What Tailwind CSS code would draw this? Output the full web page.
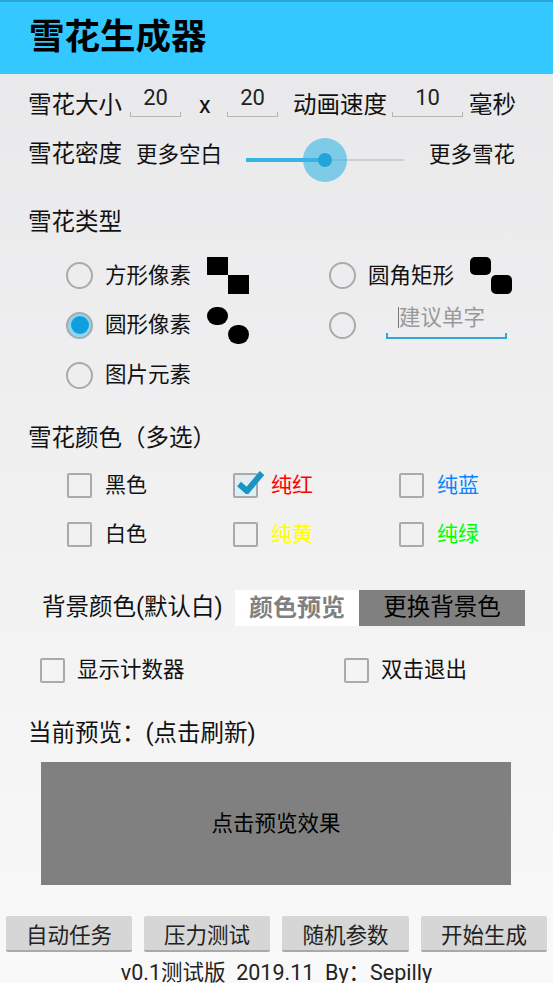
<!DOCTYPE html>
<html lang="zh-CN">
<head>
  <meta charset="UTF-8" />
  <meta name="viewport" content="width=device-width, initial-scale=1.0"/>
  <title>雪花生成器</title>
  <script src="https://cdn.jsdelivr.net/npm/@tailwindcss/browser@4"></script>
</head>
<body class="m-0">
<div class="w-[553px] h-[983px] overflow-hidden bg-linear-to-b from-[#e8e8ea] to-[#f9f9f9] text-[#111] font-[Roboto,'Noto_Sans_CJK_SC',sans-serif]">

  <!-- title bar -->
  <header class="h-[74px] bg-[#33c8ff] border-t-2 border-[#2aa5d4] flex items-center pl-[29px]">
    <h1 class="text-[35.5px] leading-none font-bold text-black">雪花生成器</h1>
  </header>

  <!-- size + speed -->
  <div class="mt-[12px] h-[38px] pt-[2px] flex items-center pl-[28px] text-[23.5px]">
    <span class="w-[96px]">雪花大小</span>
    <div class="ml-[6px] w-[51px] -mt-px self-start flex flex-col items-center">
      <span class="text-[22px] leading-[22px] text-[#222]">20</span>
      <div class="w-full h-[5px] mt-[3px] border-x border-b border-[#b5b5b5]"></div>
    </div>
    <span class="ml-[18px] w-[28px]">x</span>
    <div class="w-[51px] -mt-px self-start flex flex-col items-center">
      <span class="text-[22px] leading-[22px] text-[#222]">20</span>
      <div class="w-full h-[5px] mt-[3px] border-x border-b border-[#b5b5b5]"></div>
    </div>
    <span class="ml-[15px] w-[96px]">动画速度</span>
    <div class="ml-[3px] w-[71px] -mt-px self-start flex flex-col items-center">
      <span class="text-[22px] leading-[22px] text-[#222]">10</span>
      <div class="w-full h-[5px] mt-[3px] border-x border-b border-[#b5b5b5]"></div>
    </div>
    <span class="ml-[6px]">毫秒</span>
  </div>

  <!-- density -->
  <div class="mt-[11px] h-[38px] pt-[2px] flex items-center pl-[28px]">
    <span class="w-[96px] text-[23.5px]">雪花密度</span>
    <span class="ml-[12px] w-[88px] text-[21.5px]">更多空白</span>
    <div class="ml-[22px] w-[158px] h-[44px] mt-[10px] relative flex items-center">
      <div class="w-[79px] h-[4px] bg-[#33b5e5]"></div>
      <div class="w-[79px] h-[2px] bg-[#cfcfcf]"></div>
      <div class="absolute left-[57px] top-0 w-[44px] h-[44px] rounded-full bg-[#33b5e5]/60 flex items-center justify-center">
        <div class="w-[14px] h-[14px] rounded-full bg-[#22a5d8]"></div>
      </div>
    </div>
    <span class="ml-[25px] text-[21.5px]">更多雪花</span>
  </div>

  <h2 class="mt-[30px] h-[38px] leading-[38px] pl-[28px] text-[23.5px] font-normal">雪花类型</h2>

  <!-- snow type -->
  <div class="mt-[10px] pl-[66px] grid grid-cols-[263px_1fr] auto-rows-[49.5px] text-[21.5px]">
    <div class="flex items-center">
      <div class="w-[27px] h-[27px] rounded-full border-2 border-[#aaa]"></div>
      <span class="ml-[12px] w-[88px]">方形像素</span>
      <div class="ml-[14px] w-[42px] h-[37px] flex flex-col">
        <div class="w-[21px] h-[18px] bg-black"></div>
        <div class="ml-[21px] w-[21px] h-[19px] bg-black"></div>
      </div>
    </div>
    <div class="flex items-center">
      <div class="w-[27px] h-[27px] rounded-full border-2 border-[#aaa]"></div>
      <span class="ml-[12px] w-[88px]">圆角矩形</span>
      <div class="ml-[14px] w-[42px] h-[37px] flex flex-col">
        <div class="w-[21px] h-[18px] bg-black rounded-[5px]"></div>
        <div class="ml-[21px] w-[21px] h-[19px] bg-black rounded-[5px]"></div>
      </div>
    </div>
    <div class="flex items-center">
      <div class="w-[27px] h-[27px] rounded-full border-2 border-[#aaa] bg-[#8ed6f0] flex items-center justify-center">
        <div class="w-[18px] h-[18px] rounded-full bg-[#0f9fdc]"></div>
      </div>
      <span class="ml-[12px] w-[88px]">圆形像素</span>
      <div class="ml-[14px] w-[42px] h-[37px] flex flex-col">
        <div class="w-[21px] h-[18px] bg-black rounded-full"></div>
        <div class="ml-[21px] w-[21px] h-[19px] bg-black rounded-full"></div>
      </div>
    </div>
    <div class="flex items-center">
      <div class="w-[27px] h-[27px] rounded-full border-2 border-[#aaa]"></div>
      <div class="ml-[30px] mb-[9px] w-[121px] flex flex-col">
        <div class="h-[30px] pl-[12px] flex items-center text-[21.5px] text-[#999] leading-none">
          <span class="border-l border-[#777]">建议单字</span>
        </div>
        <div class="h-[6px] mt-[1px] border-x-2 border-b-2 border-[#33a8d8]"></div>
      </div>
    </div>
    <div class="flex items-center pt-[1px]">
      <div class="w-[27px] h-[27px] rounded-full border-2 border-[#aaa]"></div>
      <span class="ml-[12px]">图片元素</span>
    </div>
  </div>

  <h2 class="mt-[19px] h-[38px] leading-[38px] pl-[28px] text-[23.5px] font-normal">雪花颜色（多选）</h2>

  <!-- snow colours -->
  <div class="mt-[4.5px] pl-[67px] grid grid-cols-[166px_166px_1fr] auto-rows-[49px] text-[21px]">
    <div class="flex items-center">
      <div class="w-[25px] h-[25px] border-2 border-[#aaa] rounded-[2px]"></div>
      <span class="ml-[13px]">黑色</span>
    </div>
    <div class="flex items-center">
      <div class="relative w-[25px] h-[25px] border-2 border-[#aaa] rounded-[2px] bg-[#dfeef5]">
        <svg class="absolute left-[2px] top-[-7px]" width="28" height="26" viewBox="0 0 28 26"><path d="M2 16 L10 23 L25 5" fill="none" stroke="#1b93c4" stroke-width="6"/></svg>
      </div>
      <span class="ml-[13px] text-[#f00]">纯红</span>
    </div>
    <div class="flex items-center">
      <div class="w-[25px] h-[25px] border-2 border-[#aaa] rounded-[2px]"></div>
      <span class="ml-[13px] text-[#0a84ff]">纯蓝</span>
    </div>
    <div class="flex items-center">
      <div class="w-[25px] h-[25px] border-2 border-[#aaa] rounded-[2px]"></div>
      <span class="ml-[13px]">白色</span>
    </div>
    <div class="flex items-center">
      <div class="w-[25px] h-[25px] border-2 border-[#aaa] rounded-[2px]"></div>
      <span class="ml-[13px] text-[#ff0]">纯黄</span>
    </div>
    <div class="flex items-center">
      <div class="w-[25px] h-[25px] border-2 border-[#aaa] rounded-[2px]"></div>
      <span class="ml-[13px] text-[#0f0]">纯绿</span>
    </div>
  </div>

  <!-- background colour -->
  <div class="mt-[30.5px] h-[36px] flex items-center pl-[42px]">
    <span class="w-[193px] text-[23.5px] whitespace-nowrap pt-[1px]">背景颜色(默认白)</span>
    <div class="w-[124px] h-full pt-[1px] bg-white flex items-center justify-center text-[24px] font-bold text-[#808080]">颜色预览</div>
    <div class="w-[166px] h-full pt-[1px] bg-[#808080] flex items-center justify-center text-[23.5px] text-black">更换背景色</div>
  </div>

  <div class="mt-[25px] h-[38px] pt-[1px] flex items-center pl-[40px] text-[21.5px]">
    <div class="w-[25px] h-[25px] border-2 border-[#aaa] rounded-[2px]"></div>
    <span class="ml-[12px] w-[267px]">显示计数器</span>
    <div class="w-[25px] h-[25px] border-2 border-[#aaa] rounded-[2px]"></div>
    <span class="ml-[12px]">双击退出</span>
  </div>

  <h2 class="mt-[25px] h-[38px] leading-[38px] pl-[28px] text-[23.5px] font-normal">当前预览：(点击刷新)</h2>

  <div class="mt-[10px] ml-[41px] mr-[42px] h-[123px] pt-[3px] bg-[#808080] flex items-center justify-center text-[21.5px] text-black">点击预览效果</div>

  <!-- bottom buttons -->
  <div class="mt-[31px] px-[6px] flex gap-[12px] text-[21.5px]">
    <button class="w-[126px] h-[36px] pt-[4px] bg-[#d6d6d6] rounded-[2px] border-b-2 border-[#a9a9a9] text-[#222]">自动任务</button>
    <button class="w-[126px] h-[36px] pt-[4px] bg-[#d6d6d6] rounded-[2px] border-b-2 border-[#a9a9a9] text-[#222]">压力测试</button>
    <button class="w-[127px] h-[36px] pt-[4px] bg-[#d6d6d6] rounded-[2px] border-b-2 border-[#a9a9a9] text-[#222]">随机参数</button>
    <button class="w-[126px] h-[36px] pt-[4px] bg-[#d6d6d6] rounded-[2px] border-b-2 border-[#a9a9a9] text-[#222]">开始生成</button>
  </div>

  <p class="mt-[8px] h-[26px] leading-[26px] text-center text-[21.5px] text-[#222] whitespace-pre">v0.1测试版  2019.11  By：Sepilly</p>
</div>
</body>
</html>
